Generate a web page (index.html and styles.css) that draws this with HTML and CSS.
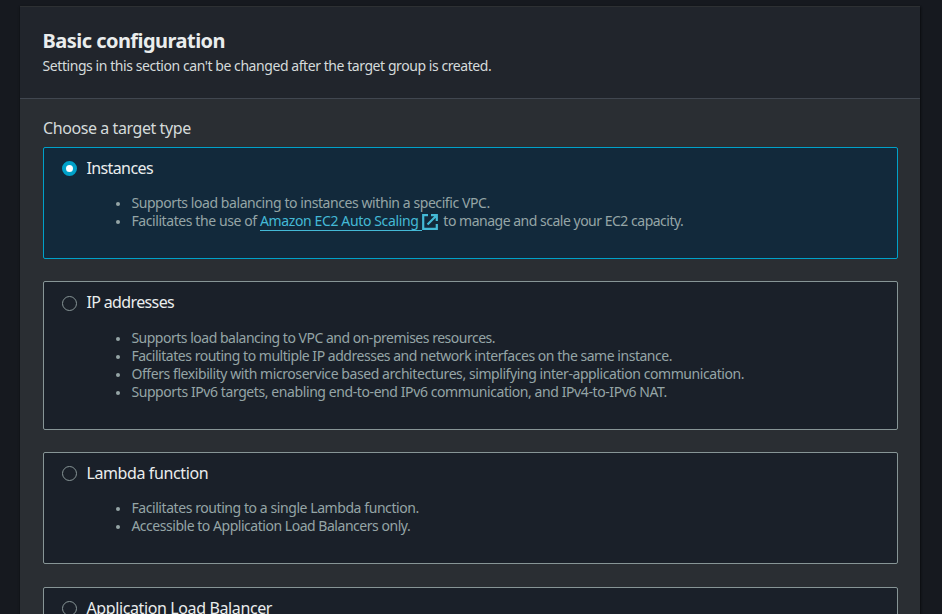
FILE: index.html
```html
<!DOCTYPE html>
<html lang="en">
<head>
<meta charset="utf-8">
<title>Basic configuration</title>
<link rel="stylesheet" href="styles.css">
</head>
<body>
<main class="panel">
  <header class="panel-header">
    <h2>Basic configuration</h2>
    <p>Settings in this section can't be changed after the target group is created.</p>
  </header>
  <section class="panel-body">
    <div class="field-label">Choose a target type</div>
    <div class="tiles">
      <div class="tile selected">
        <div class="tile-head"><span class="radio"></span><span class="title snug">Instances</span></div>
        <ul>
          <li class="snug-line">Supports load balancing to instances within a specific VPC.</li>
          <li>Facilitates the use of <a class="link"><span class="link-text">Amazon EC2 Auto Scaling&nbsp;</span><svg class="external" viewBox="0 0 16 16"><path d="M6 1.2H1.2v13.6h13.6V10M9 1.2h5.8V7M14.5 1.5L5.5 10.5"/></svg></a><span class="tighter"> to manage and scale your EC2 capacity.</span></li>
        </ul>
      </div>
      <div class="tile tall">
        <div class="tile-head"><span class="radio"></span><span class="title tight">IP addresses</span></div>
        <ul>
          <li class="tighter">Supports load balancing to VPC and on-premises resources.</li>
          <li class="tight-line">Facilitates routing to multiple IP addresses and network interfaces on the same instance.</li>
          <li class="snug-line">Offers flexibility with microservice based architectures, simplifying inter-application communication.</li>
          <li>Supports IPv6 targets, enabling end-to-end IPv6 communication, and IPv4-to-IPv6 NAT.</li>
        </ul>
      </div>
      <div class="tile">
        <div class="tile-head"><span class="radio"></span><span class="title">Lambda function</span></div>
        <ul>
          <li class="snug-line">Facilitates routing to a single Lambda function.</li>
          <li class="tight-line">Accessible to Application Load Balancers only.</li>
        </ul>
      </div>
      <div class="tile">
        <div class="tile-head"><span class="radio"></span><span class="title">Application Load Balancer</span></div>
      </div>
    </div>
  </section>
</main>
</body>
</html>
```
FILE: styles.css
```css
* { box-sizing: border-box; }
html, body { height: 100%; overflow: hidden; }
body {
  margin: 0;
  padding: 6px 22px 0 20px;
  background: #16191f;
  color: #d5dbdb;
  font-family: "Noto Sans", "Open Sans", sans-serif;
  font-size: 14px;
}
.panel {
  height: 100%;
  background: #2a2e33;
  border-top: 1px solid #2d3033;
  box-shadow: 0 1px 2px rgba(0, 0, 0, .5), 1px 1px 2px rgba(0, 0, 0, .35);
}
.panel-header {
  height: 92px;
  padding: 22px 22px 0 22.6px;
  background: #21252c;
  border-bottom: 1px solid #414750;
}
h2 {
  margin: 0;
  color: #eaeded;
  font-size: 20px;
  font-weight: 700;
  line-height: 24px;
  letter-spacing: -.54px;
}
.panel-header p {
  margin: 3px 0 0;
  line-height: 20px;
  letter-spacing: -.435px;
}
.panel-body { padding: 18px 22px 0 23px; }
.field-label {
  margin-bottom: 8px;
  font-size: 16px;
  line-height: 22px;
  letter-spacing: -.42px;
}
.tiles { display: flex; flex-direction: column; gap: 22px; }
.tile {
  flex: none;
  height: 112px;
  padding: 8px 18px 0;
  background: #1a2029;
  border: 1px solid #879596;
  border-radius: 2px;
}
.tile.tall { height: 149px; }
.tile:last-child { margin-top: 1px; }
.tile.selected { background: #12293b; border-color: #00a1c9; }
.tile-head { display: flex; align-items: center; height: 24px; gap: 9.4px; }
.radio {
  width: 15px;
  height: 15px;
  margin-top: 1px;
  border: 1px solid #879596;
  border-radius: 50%;
}
.tall .radio { position: relative; top: 1px; }
.selected .radio { border: 4px solid #00a1c9; background: #fff; }
.title {
  color: #eaeded;
  font-size: 16px;
  line-height: 22px;
  letter-spacing: -.38px;
}
.title.snug { letter-spacing: -.6px; }
.title.tight { letter-spacing: -.63px; }
ul {
  margin: 14px 0 0;
  padding-left: 69.4px;
  color: #95a5a6;
  line-height: 18px;
  letter-spacing: -.41px;
  white-space: nowrap;
  list-style: none;
}
.tall ul { margin-top: 15px; }
li { position: relative; height: 18px; }
li::before {
  content: "";
  position: absolute;
  left: -15.4px;
  top: 8px;
  width: 4px;
  height: 4px;
  border-radius: 50%;
  background: #95a5a6;
}
.snug-line { letter-spacing: -.425px; }
.tight-line { letter-spacing: -.47px; }
.tighter { letter-spacing: -.49px; }
.link { color: #44b9d6; margin-right: 2px; }
.link-text { border-bottom: 1px solid #44b9d6; letter-spacing: -.37px; }
.external {
  width: 16px;
  height: 16px;
  margin-left: .5px;
  vertical-align: -4px;
  fill: none;
  stroke: #44b9d6;
  stroke-width: 2.2;
}
```
